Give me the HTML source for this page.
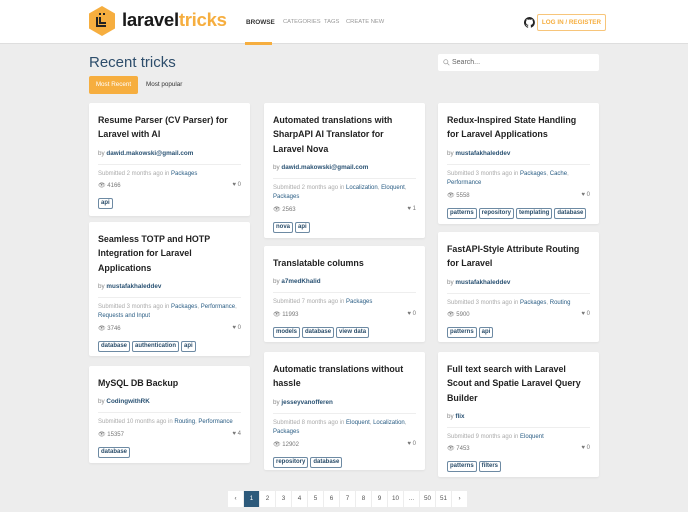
<!DOCTYPE html>
<html><head><meta charset="utf-8"><style>
*{box-sizing:border-box;margin:0;padding:0}
body{width:688px;height:512px;overflow:hidden;background:#ededed;font-family:"Liberation Sans",sans-serif;position:relative}
.hdr{position:absolute;left:0;top:0;width:688px;height:44px;background:#fff;border-bottom:1px solid #dedede}
.logo{position:absolute;left:122px;top:9px;font-size:18.6px;font-weight:bold;letter-spacing:-0.3px;color:#1a1a1a}
.logo span{color:#f6ae3f}
.nav{position:absolute;top:19px;font-size:6.4px;color:#999}
.ul{position:absolute;left:245px;top:42px;width:27px;height:3px;background:#f6ae3f}
.login{position:absolute;left:537px;top:14px;width:69px;height:17px;border:1px solid #f7c57a;border-radius:2px;color:#f6ae3f;font-size:6.3px;font-weight:bold;text-align:center;line-height:15px}
h1{position:absolute;left:89px;top:54px;font-size:15px;font-weight:normal;color:#2d4d6b}
.b1{position:absolute;left:89px;top:76px;width:49px;height:18px;background:#f6ae3f;color:#fff;font-size:6.3px;text-align:center;line-height:18px;border-radius:2px}
.b2{position:absolute;left:146px;top:76px;font-size:6.3px;line-height:18px;color:#333}
.search{position:absolute;left:438px;top:54px;width:161px;height:17px;background:#fff;border-radius:2px;font-size:7px;color:#666;padding-left:14px;line-height:17px}
.card{position:absolute;width:161px;background:#fff;border-radius:2px;box-shadow:0 1px 2px rgba(0,0,0,.06);padding:10px 9px 0}
.t{font-size:8.9px;font-weight:bold;line-height:14.3px;color:#222}
.by{font-size:6.3px;color:#888;margin-top:8px;padding-bottom:7px;border-bottom:1px solid #eee}
.by b{color:#2a5273}
.m{font-size:6px;color:#aaa;margin-top:5px;line-height:9.5px}
.m a{color:#2a5d84;text-decoration:none}
.v{font-size:6px;color:#777;margin-top:3px;height:10px;position:relative}
.v i{position:absolute;right:0;top:0;font-style:normal}
.tg{margin-top:6px;font-size:0;line-height:0}
.tg span{display:inline-block;border:1px solid #6d8aa3;border-radius:2px;font-size:6px;font-weight:bold;color:#2a4d6a;padding:0 2px;line-height:9px;margin-right:2px}
.pg{position:absolute;top:491px;left:228px;display:flex}
.pg span{display:block;height:16px;min-width:15px;padding:0 3px;background:#fff;margin-right:1px;font-size:6.3px;color:#555;text-align:center;line-height:16px}
.pg .a{background:#2d5a7b;color:#fff}
</style></head><body>
<div class="hdr">
<svg style="position:absolute;left:88px;top:6px" width="28" height="30" viewBox="0 0 28 30"><polygon points="14,0 27,7.5 27,22.5 14,30 1,22.5 1,7.5" fill="#f6ae3f"/><path d="M9 11v9h9M12 11v6h6" stroke="#222" stroke-width="2" fill="none"/><rect x="11" y="7" width="2" height="2" fill="#222"/><rect x="15" y="7" width="2" height="2" fill="#222"/></svg>
<div class="logo">laravel<span>tricks</span></div>
<div class="nav" style="left:246px;color:#333;font-weight:bold">BROWSE</div>
<div class="nav" style="left:283px;font-size:5.8px">CATEGORIES</div>
<div class="nav" style="left:324px;font-size:5.8px">TAGS</div>
<div class="nav" style="left:346px;font-size:5.8px">CREATE NEW</div>
<div class="ul"></div>
<svg style="position:absolute;left:524px;top:17px" width="11" height="11" viewBox="0 0 16 16"><path fill="#222" d="M8 0a8 8 0 00-2.5 15.6c.4 0 .5-.2.5-.4v-1.5c-2.2.5-2.7-1-2.700-1-.4-.9-.9-1.200-.9-1.200-.7-.5.1-.5.1-.5.8.1 1.200.8 1.200.8.7 1.300 1.900.9 2.300.7.1-.5.3-.9.5-1.100-1.800-.2-3.600-.9-3.600-4 0-.9.3-1.600.8-2.100-.1-.2-.4-1 .1-2.100 0 0 .7-.2 2.200.8a7.600 7.600 0 014 0c1.500-1 2.200-.8 2.200-.8.4 1.100.2 1.900.1 2.100.5.6.8 1.300.8 2.100 0 3.100-1.900 3.800-3.600 4 .3.3.5.8.5 1.500v2.200c0 .2.1.5.6.4A8 8 0 008 0z"/></svg>
<div class="login">LOG IN / REGISTER</div>
</div>
<h1>Recent tricks</h1>
<div class="b1">Most Recent</div><div class="b2">Most popular</div>
<div class="search"><svg style="position:absolute;left:5px;top:5px" width="7" height="7" viewBox="0 0 10 10"><circle cx="4" cy="4" r="3" stroke="#999" fill="none"/><path d="M6.5 6.5L9 9" stroke="#999"/></svg>Search...</div>

<div class="card" style="left:89px;top:103px;height:113px"><div class="t">Resume Parser (CV Parser) for Laravel with AI</div><div class="by">by <b>dawid.makowski@gmail.com</b></div><div class="m">Submitted 2 months ago in <a>Packages</a></div><div class="v">👁 4166<i>♥ 0</i></div><div class="tg"><span>api</span></div></div>
<div class="card" style="left:89px;top:222px;height:134px"><div class="t">Seamless TOTP and HOTP Integration for Laravel Applications</div><div class="by">by <b>mustafakhaleddev</b></div><div class="m">Submitted 3 months ago in <a>Packages</a>, <a>Performance</a>, <a>Requests and Input</a></div><div class="v">👁 3746<i>♥ 0</i></div><div class="tg"><span>database</span><span>authentication</span><span>api</span></div></div>
<div class="card" style="left:89px;top:366px;height:97px"><div class="t">MySQL DB Backup</div><div class="by">by <b>CodingwithRK</b></div><div class="m">Submitted 10 months ago in <a>Routing</a>, <a>Performance</a></div><div class="v">👁 15357<i>♥ 4</i></div><div class="tg"><span>database</span></div></div>

<div class="card" style="left:264px;top:103px;height:135px"><div class="t">Automated translations with SharpAPI AI Translator for Laravel Nova</div><div class="by">by <b>dawid.makowski@gmail.com</b></div><div class="m">Submitted 2 months ago in <a>Localization</a>, <a>Eloquent</a>, <a>Packages</a></div><div class="v">👁 2563<i>♥ 1</i></div><div class="tg"><span>nova</span><span>api</span></div></div>
<div class="card" style="left:264px;top:246px;height:96px"><div class="t">Translatable columns</div><div class="by">by <b>a7medKhalid</b></div><div class="m">Submitted 7 months ago in <a>Packages</a></div><div class="v">👁 11993<i>♥ 0</i></div><div class="tg"><span>models</span><span>database</span><span>view data</span></div></div>
<div class="card" style="left:264px;top:352px;height:118px"><div class="t">Automatic translations without hassle</div><div class="by">by <b>jesseyvanofferen</b></div><div class="m">Submitted 8 months ago in <a>Eloquent</a>, <a>Localization</a>, <a>Packages</a></div><div class="v">👁 12902<i>♥ 0</i></div><div class="tg"><span>repository</span><span>database</span></div></div>

<div class="card" style="left:438px;top:103px;height:121px"><div class="t">Redux-Inspired State Handling for Laravel Applications</div><div class="by">by <b>mustafakhaleddev</b></div><div class="m">Submitted 3 months ago in <a>Packages</a>, <a>Cache</a>, <a>Performance</a></div><div class="v">👁 5558<i>♥ 0</i></div><div class="tg"><span>patterns</span><span>repository</span><span>templating</span><span>database</span></div></div>
<div class="card" style="left:438px;top:232px;height:110px"><div class="t">FastAPI-Style Attribute Routing for Laravel</div><div class="by">by <b>mustafakhaleddev</b></div><div class="m">Submitted 3 months ago in <a>Packages</a>, <a>Routing</a></div><div class="v">👁 5900<i>♥ 0</i></div><div class="tg"><span>patterns</span><span>api</span></div></div>
<div class="card" style="left:438px;top:352px;height:125px"><div class="t">Full text search with Laravel Scout and Spatie Laravel Query Builder</div><div class="by">by <b>flix</b></div><div class="m">Submitted 9 months ago in <a>Eloquent</a></div><div class="v">👁 7453<i>♥ 0</i></div><div class="tg"><span>patterns</span><span>filters</span></div></div>

<div class="pg"><span>‹</span><span class="a">1</span><span>2</span><span>3</span><span>4</span><span>5</span><span>6</span><span>7</span><span>8</span><span>9</span><span>10</span><span>...</span><span>50</span><span>51</span><span>›</span></div>
</body></html>
